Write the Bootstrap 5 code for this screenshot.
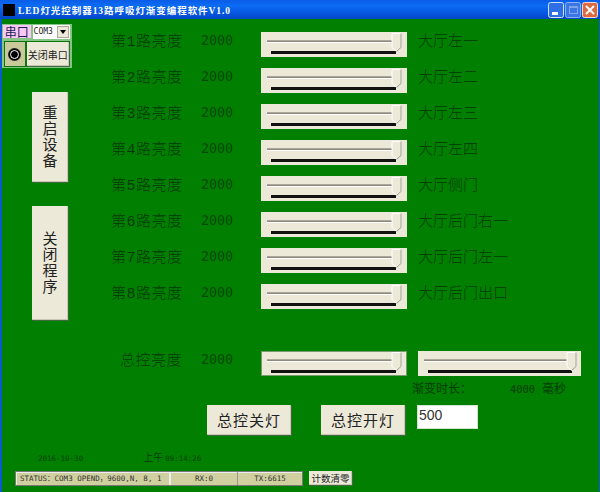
<!DOCTYPE html>
<html lang="zh">
<head>
<meta charset="utf-8">
<title>LED</title>
<link href="https://cdn.jsdelivr.net/npm/bootstrap@5.3.0/dist/css/bootstrap.min.css" rel="stylesheet">
<style>
html,body{margin:0;padding:0;background:#007f00;overflow:hidden}
body{font-family:"Noto Sans CJK SC","Liberation Serif",sans-serif;color:#053a05}
.app-win{width:600px;height:492px;background:#007f00;border-left:2px solid #0a5bd0;border-right:1px solid #0a5bd0;box-sizing:border-box}
.title-bar{height:19px;margin-left:-2px;margin-right:-1px;padding:0 2px 0 3px;background:linear-gradient(#0a5ce8,#0c6cf4 30%,#0553dc 75%,#0447c4);color:#fff;font:bold 9.5px "Liberation Serif","Noto Sans CJK SC",serif;letter-spacing:.95px}
.title-ico{width:12px;height:12px;background:#000;margin-right:3px}
.win-btns svg{display:block}
.left-col{width:109px;flex:none}
.port-panel{width:70px;height:44px;margin-top:5px;background:#86c586;padding:1px 2px 2px 1px}
.port-tag{width:28px;height:13px;background:#fbc8f8;color:#1c1c50;font-size:12px;line-height:13px;text-align:center}
.port-combo{width:38px;height:14px;margin-left:2px;background:#fff;color:#222;font:8px/14px "DejaVu Sans Mono",monospace;padding-left:1px;position:relative}
.port-arrow{position:absolute;right:1px;top:1px;width:12px;height:12px;background:#ece9d8;border:1px solid #aca899;display:flex;align-items:center;justify-content:center}
.port-arrow i{border:3px solid transparent;border-top:4px solid #000;border-bottom:0;display:block}
.port-row{margin-top:2px;margin-left:1px;height:26px;background:#0b740b;padding:1px;gap:2px}
.radio-box{width:20px;height:24px;background:#c9c99b;display:flex;align-items:center;justify-content:center}
.radio-dot{width:11px;height:11px;border-radius:50%;background:#000;outline:1px solid #fff;outline-offset:-2px;box-shadow:0 0 0 1px #222}
.xp-btn{background:#ece9d8;color:#222;border:0;padding:0;box-shadow:1px 1px 0 #3e6a3e,inset -1px -1px 0 #c9c6b4;display:flex;align-items:center;justify-content:center;text-align:center}
.port-close{width:43px;height:24px;font-size:10px}
.side-btn{width:36px;margin-left:30px;font-size:15px;line-height:21px;writing-mode:vertical-lr;text-orientation:upright;letter-spacing:1px}
.restart-btn{height:90px;margin-top:24px}
.quit-btn{height:114px;margin-top:24px}
.main-col{flex:1;min-width:0;padding-top:7px}
.ch-row{height:36px}
.ch-label{width:71px;font:300 15px "Liberation Mono","Noto Sans CJK SC",monospace;letter-spacing:.5px;margin-bottom:8px;white-space:nowrap;text-align:right}
.ch-val{width:60px;margin-left:19px;margin-bottom:8px;font:13.3px "DejaVu Sans Mono",monospace;color:#084a08}
.ch-name{margin-left:11px;margin-bottom:8px;font-size:15px;font-weight:300;white-space:nowrap}
.ch-slider{display:block;flex:none;margin-top:1px}
.ch-slider+.ch-slider{margin-left:11px}
.master-wrap{margin-top:31px}
.caption-row{margin-left:301px;height:14px;font-size:12px;line-height:14px;white-space:nowrap}
.cap-num{margin-left:38px;font:10.400px "DejaVu Sans Mono",monospace;margin-right:7px}
.action-row{margin-top:10px;margin-left:96px}
.act-btn{width:84px;height:30px;font-size:15px;letter-spacing:1px}
.act-btn+.act-btn{margin-left:30px}
.dur-input{width:61px;height:24px;margin-left:12px;background:#fff;border:1px solid #cfe7cf;color:#333;font:14px/18px "Liberation Sans",sans-serif;padding:0 1px}
.date-row{position:absolute;left:36px;top:451px;font:7.500px/12px "DejaVu Sans Mono","Noto Sans CJK SC",monospace;white-space:nowrap;color:#063f06}
.date-row span+span{margin-left:60px}
.date-row b{font:normal 10px/12px "Noto Sans CJK SC",sans-serif;color:#053a05;margin-right:2px}
.status-row{position:absolute;left:13px;top:471px}
.status-strip{width:288px;height:15px;background:#cfcf9f;border:1px solid #777;box-shadow:inset 1px 1px 0 #eee;font:7.500px/13px "DejaVu Sans Mono","Noto Sans CJK SC",monospace;color:#333;white-space:nowrap}
.st-a{width:155px;padding-left:4px;border-right:2px solid #eee}
.st-b{width:67px;text-align:center;border-right:1px solid #999}
.st-c{flex:1;text-align:center}
.clear-btn{width:43px;height:14px;margin-left:6px;font-size:9.5px}
</style>
</head>
<body>
<svg width="0" height="0" class="position-absolute">
<defs>
<symbol id="sl" viewBox="0 0 146 25">
<rect width="146" height="25" fill="#ece9d8"/>
<rect x="6" y="8" width="126" height="1" fill="#aca899"/><rect x="6" y="9" width="126" height="1" fill="#8d8a7b"/><rect x="6" y="10" width="126" height="1" fill="#fff"/>
<rect x="10" y="19" width="125" height="3" fill="#111"/>
<path d="M131 1.500h9v14l-4.500 4-4.500-4z" fill="#ece9d8" stroke="#fff"/><path d="M140 1.500v14l-4.500 4" fill="none" stroke="#9a9786"/>
</symbol>
<symbol id="sl2" viewBox="0 0 163 25">
<rect width="163" height="25" fill="#ece9d8"/>
<rect x="6" y="8" width="144" height="1" fill="#aca899"/><rect x="6" y="9" width="144" height="1" fill="#8d8a7b"/><rect x="6" y="10" width="144" height="1" fill="#fff"/>
<rect x="10" y="19" width="144" height="3" fill="#111"/>
<path d="M149 1.500h9v14l-4.500 4-4.500-4z" fill="#ece9d8" stroke="#fff"/><path d="M158 1.500v14l-4.500 4" fill="none" stroke="#9a9786"/>
</symbol>
</defs>
</svg>
<div class="app-win position-relative d-flex flex-column">
  <div class="title-bar d-flex align-items-center">
    <span class="title-ico"></span>
    <span class="flex-grow-1">LED灯光控制器13路呼吸灯渐变编程软件V1.0</span>
    <span class="win-btns d-flex gap-0">
      <svg width="17" height="16" viewBox="0 0 17 16"><rect x=".5" y=".5" width="15" height="15" rx="2" fill="#2f6fe6" stroke="#cfe0fb"/><rect x="4" y="10" width="6" height="3" fill="#fff"/></svg>
      <svg width="17" height="16" viewBox="0 0 17 16"><rect x=".5" y=".5" width="15" height="15" rx="2" fill="#3b76e4" stroke="#8fb2f0"/><rect x="4.500" y="4.500" width="8" height="7" fill="none" stroke="#7fa6ea"/><rect x="4" y="4" width="9" height="2" fill="#7fa6ea"/></svg>
      <svg width="16" height="16" viewBox="0 0 16 16"><rect x=".5" y=".5" width="15" height="15" rx="2" fill="#dd6a42" stroke="#f3d9cf"/><path d="M4 4l8 8M12 4l-8 8" stroke="#fff" stroke-width="2"/></svg>
    </span>
  </div>
  <div class="d-flex flex-grow-1">
    <div class="left-col d-flex flex-column">
      <div class="port-panel">
        <div class="d-flex">
          <div class="port-tag">串口</div>
          <div class="port-combo">COM3<span class="port-arrow"><i></i></span></div>
        </div>
        <div class="d-flex port-row">
          <div class="radio-box"><span class="radio-dot"></span></div>
          <button class="xp-btn port-close" type="button">关闭串口</button>
        </div>
      </div>
      <button class="xp-btn side-btn restart-btn" type="button">重启设备</button>
      <button class="xp-btn side-btn quit-btn" type="button">关闭程序</button>
    </div>
    <div class="main-col">
      <div class="ch-row d-flex align-items-center"><div class="ch-label">第1路亮度</div><div class="ch-val">2000</div><svg class="ch-slider" width="146" height="25"><use href="#sl"/></svg><div class="ch-name">大厅左一</div></div>
      <div class="ch-row d-flex align-items-center"><div class="ch-label">第2路亮度</div><div class="ch-val">2000</div><svg class="ch-slider" width="146" height="25"><use href="#sl"/></svg><div class="ch-name">大厅左二</div></div>
      <div class="ch-row d-flex align-items-center"><div class="ch-label">第3路亮度</div><div class="ch-val">2000</div><svg class="ch-slider" width="146" height="25"><use href="#sl"/></svg><div class="ch-name">大厅左三</div></div>
      <div class="ch-row d-flex align-items-center"><div class="ch-label">第4路亮度</div><div class="ch-val">2000</div><svg class="ch-slider" width="146" height="25"><use href="#sl"/></svg><div class="ch-name">大厅左四</div></div>
      <div class="ch-row d-flex align-items-center"><div class="ch-label">第5路亮度</div><div class="ch-val">2000</div><svg class="ch-slider" width="146" height="25"><use href="#sl"/></svg><div class="ch-name">大厅侧门</div></div>
      <div class="ch-row d-flex align-items-center"><div class="ch-label">第6路亮度</div><div class="ch-val">2000</div><svg class="ch-slider" width="146" height="25"><use href="#sl"/></svg><div class="ch-name">大厅后门右一</div></div>
      <div class="ch-row d-flex align-items-center"><div class="ch-label">第7路亮度</div><div class="ch-val">2000</div><svg class="ch-slider" width="146" height="25"><use href="#sl"/></svg><div class="ch-name">大厅后门左一</div></div>
      <div class="ch-row d-flex align-items-center"><div class="ch-label">第8路亮度</div><div class="ch-val">2000</div><svg class="ch-slider" width="146" height="25"><use href="#sl"/></svg><div class="ch-name">大厅后门出口</div></div>
      <div class="master-wrap ch-row d-flex align-items-center">
        <div class="ch-label">总控亮度</div><div class="ch-val">2000</div>
        <svg class="ch-slider" width="146" height="25"><use href="#sl"/><rect x=".5" y=".5" width="145" height="24" fill="none" stroke="#064d06" stroke-dasharray="1 1"/></svg>
        <svg class="ch-slider" width="163" height="25"><use href="#sl2"/></svg>
      </div>
      <div class="caption-row">渐变时长&#xFF1A;<span class="cap-num">4000</span>毫秒</div>
      <div class="action-row d-flex align-items-start">
        <button class="xp-btn act-btn" type="button">总控关灯</button>
        <button class="xp-btn act-btn" type="button">总控开灯</button>
        <div class="dur-input">500</div>
      </div>
    </div>
  </div>
  <div class="date-row"><span>2016-10-30</span><span><b>上午</b>09:14:26</span></div>
  <div class="status-row d-flex">
    <div class="status-strip d-flex">
      <div class="st-a">STATUS&#xFF1A;COM3 OPEND&#xFF0C;9600,N, 8, 1</div>
      <div class="st-b">RX:0</div>
      <div class="st-c">TX:6615</div>
    </div>
    <button class="xp-btn clear-btn" type="button">计数清零</button>
  </div>
</div>
<script src="https://cdn.jsdelivr.net/npm/bootstrap@5.3.0/dist/js/bootstrap.bundle.min.js"></script>
</body>
</html>
